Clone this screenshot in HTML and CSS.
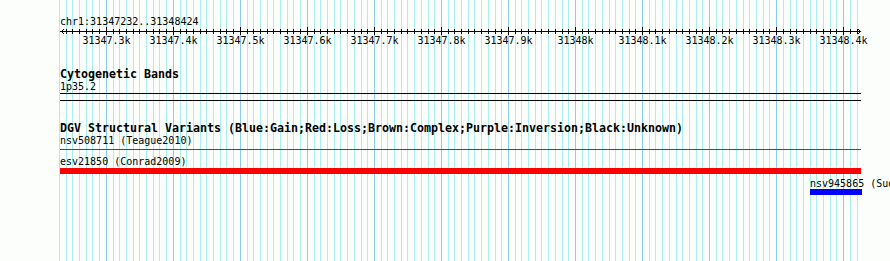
FILE: index.html
```html
<!DOCTYPE html>
<html>
<head>
<meta charset="utf-8">
<title>Genome browser</title>
<link rel="stylesheet" href="styles.css">
</head>
<body>
<div class="panel">
  <svg class="grid" id="grid" width="890" height="261" shape-rendering="crispEdges"></svg>
  <div class="tracks">
    <div class="label ref-label">chr1:31347232..31348424</div>
    <svg class="ruler" id="ruler" width="890" height="20" shape-rendering="crispEdges">
      <rect x="60" y="3" width="801" height="1" fill="#000"/>
      <rect x="61" y="3" width="1" height="1" fill="#000"/>
      <rect x="62" y="2" width="1" height="1" fill="#000"/>
      <rect x="63" y="1" width="1" height="1" fill="#000"/>
      <rect x="62" y="4" width="1" height="1" fill="#000"/>
      <rect x="63" y="5" width="1" height="1" fill="#000"/>
      <rect x="859" y="2" width="1" height="1" fill="#000"/>
      <rect x="858" y="1" width="1" height="1" fill="#000"/>
      <rect x="859" y="4" width="1" height="1" fill="#000"/>
      <rect x="858" y="5" width="1" height="1" fill="#000"/>
      <g id="ticks"></g>
      <g class="ruler-labels" text-anchor="middle">
        <text x="106.5" y="16">31347.3k</text>
        <text x="173.5" y="16">31347.4k</text>
        <text x="240.5" y="16">31347.5k</text>
        <text x="307.5" y="16">31347.6k</text>
        <text x="374.5" y="16">31347.7k</text>
        <text x="441.5" y="16">31347.8k</text>
        <text x="508.5" y="16">31347.9k</text>
        <text x="575.5" y="16">31348k</text>
        <text x="642.5" y="16">31348.1k</text>
        <text x="709.5" y="16">31348.2k</text>
        <text x="776.5" y="16">31348.3k</text>
        <text x="843.5" y="16">31348.4k</text>
      </g>
    </svg>

    <div class="track-title cyto-title">Cytogenetic Bands</div>
    <div class="label">1p35.2</div>
    <div class="band"></div>

    <div class="track-title dgv-title">DGV Structural Variants (Blue:Gain;Red:Loss;Brown:Complex;Purple:Inversion;Black:Unknown)</div>
    <div class="label">nsv508711 (Teague2010)</div>
    <div class="feature-line loss"></div>
    <div class="label esv-label">esv21850 (Conrad2009)</div>
    <div class="feature-bar loss full"></div>
    <div class="label gain-label">nsv945865 (Sudmant2013)</div>
    <div class="feature-bar gain short"></div>
  </div>
</div>
<script src="script.js"></script>
</body>
</html>
```

FILE: styles.css
```css
html, body {
  margin: 0;
  padding: 0;
}
body {
  background: #fbfefb;
  width: 890px;
  height: 261px;
  overflow: hidden;
  font-family: "DejaVu Sans Mono", "Liberation Mono", monospace;
  font-size: 10px;
  color: #000;
}
.panel {
  position: relative;
  width: 890px;
  height: 261px;
  overflow: hidden;
}
.grid {
  position: absolute;
  left: 0;
  top: 0;
}
.tracks {
  position: relative;
  display: flex;
  flex-direction: column;
  align-items: flex-start;
}
.label {
  padding-left: 60px;
  line-height: 13px;
  height: 13px;
  white-space: nowrap;
}
.ref-label {
  margin-top: 15px;
}
.ruler {
  display: block;
  overflow: visible;
}
.ruler text {
  font-family: "DejaVu Sans Mono", monospace;
  font-size: 10px;
  fill: #000;
}
.track-title {
  padding-left: 60px;
  font-weight: bold;
  font-size: 11.63px;
  line-height: 12px;
  height: 12px;
  white-space: nowrap;
}
.cyto-title {
  margin-top: 20px;
}
.dgv-title {
  margin-top: 21px;
}
.band {
  margin-left: 60px;
  width: 801px;
  height: 6px;
  border-top: 1px solid #000;
  border-bottom: 1px solid #000;
}
.feature-line {
  margin-left: 60px;
  width: 801px;
  height: 1px;
  margin-top: 2px;
}
.esv-label {
  margin-top: 5px;
}
.feature-bar {
  height: 6px;
}
.full {
  margin-left: 60px;
  width: 801px;
}
.gain-label {
  margin-left: 750px;
  margin-top: 3px;
}
.short {
  margin-left: 810px;
  width: 52px;
  margin-top: -1px;
}
.loss {
  background: #ff0000;
}
.gain {
  background: #0000ff;
}
```

FILE: script.js
```js
(function () {
  var NS = "http://www.w3.org/2000/svg";
  var grid = document.getElementById("grid");
  var ticks = document.getElementById("ticks");
  function xAt(k) {
    return Math.floor(106.3 + k * 6.703);
  }
  function rect(parent, x, y, w, h, fill) {
    var r = document.createElementNS(NS, "rect");
    r.setAttribute("x", x);
    r.setAttribute("y", y);
    r.setAttribute("width", w);
    r.setAttribute("height", h);
    r.setAttribute("fill", fill);
    parent.appendChild(r);
  }
  for (var k = -7; k <= 112; k++) {
    var x = xAt(k);
    var major = ((k % 10) + 10) % 10 === 0;
    rect(grid, x, 0, 1, 261, major ? "#88ccee" : "#aaeeee");
    if (k >= -6) {
      if (major) {
        rect(ticks, x, -1, 1, 8, "#000");
      } else {
        rect(ticks, x, 1, 1, 5, "#000");
      }
    }
  }
})();
```
